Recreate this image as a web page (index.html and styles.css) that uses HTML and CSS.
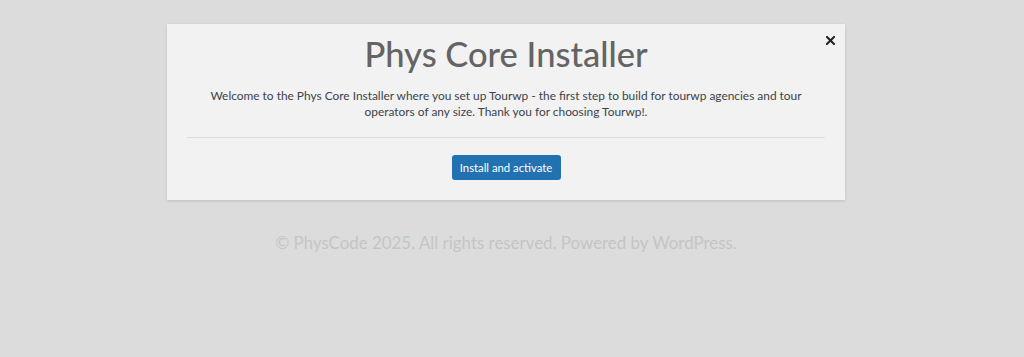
FILE: index.html
```html
<!DOCTYPE html>
<html lang="en">
<head>
<meta charset="utf-8">
<title>Phys Core Installer</title>
<link rel="stylesheet" href="styles.css">
</head>
<body>
<div class="page">
  <div class="card">
    <button class="close" aria-label="Close">
      <svg width="9" height="9" viewBox="0 0 9 9"><path d="M1 1L8 8M8 1L1 8" stroke="#1d2327" stroke-width="2" stroke-linecap="square"/></svg>
    </button>
    <h1 class="title">Phys Core Installer</h1>
    <p class="intro">Welcome to the Phys Core Installer where you set up Tourwp - the first step to build for tourwp agencies and tour operators of any size. Thank you for choosing Tourwp!.</p>
    <hr class="divider">
    <div class="actions">
      <button class="btn-primary">Install and activate</button>
    </div>
  </div>
  <p class="footer">© PhysCode 2025. All rights reserved. Powered by WordPress.</p>
</div>
</body>
</html>
```

FILE: styles.css
```css
html, body {
  margin: 0;
  padding: 0;
  background: #dcdcdc;
  font-family: Lato, "Liberation Sans", sans-serif;
}
.page {
  width: 1012px;
  padding-top: 24px;
  display: flex;
  flex-direction: column;
  align-items: center;
}
.card {
  position: relative;
  width: 678px;
  box-sizing: border-box;
  background: #f2f2f2;
  box-shadow: 0 1px 3px rgba(0,0,0,0.13);
  padding: 10px 20px 20px;
  text-align: center;
}
.close {
  position: absolute;
  top: 6px;
  right: 5px;
  width: 20px;
  height: 20px;
  border: 0;
  background: transparent;
  padding: 0;
  display: flex;
  align-items: center;
  justify-content: center;
  cursor: pointer;
}
.title {
  margin: 0;
  font-size: 34.5px;
  line-height: 40px;
  font-weight: 500;
  color: #646464;
}
.intro {
  margin: 14px 0 0;
  font-size: 11.9px;
  line-height: 16px;
  color: #3c434a;
}
.divider {
  margin: 17px 0 0;
  border: 0;
  border-top: 1px solid #dcdcde;
}
.actions {
  margin-top: 17px;
  display: flex;
  justify-content: center;
}
.btn-primary {
  height: 25px;
  width: 109px;
  padding: 0;
  border: 0;
  border-radius: 3px;
  background: #2271b1;
  color: #fff;
  font-family: inherit;
  font-size: 11.3px;
}
.footer {
  margin: 33px 0 0;
  font-size: 16.9px;
  line-height: 20px;
  color: #c5c5c5;
}
```
